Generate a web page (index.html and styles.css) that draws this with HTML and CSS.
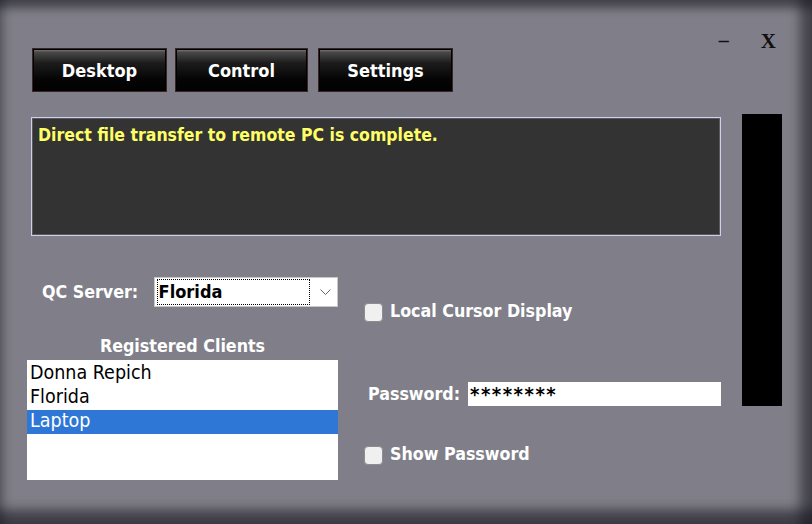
FILE: index.html
```html
<!DOCTYPE html>
<html>
<head>
<meta charset="utf-8">
<link rel="stylesheet" href="styles.css">
</head>
<body>
<div class="window">
  <div class="header">
    <div class="tabs">
      <button class="tab">Desktop</button>
      <button class="tab tab-narrow">Control</button>
      <button class="tab tab-last">Settings</button>
    </div>
    <div class="winctl">
      <span class="min">–</span>
      <span class="close">X</span>
    </div>
  </div>
  <div class="main">
    <div class="content">
      <div class="message">Direct file transfer to remote PC is complete.</div>
      <div class="lower">
        <div class="left">
          <div class="server-row">
            <span class="label">QC Server:</span>
            <div class="select">
              <span class="select-value">Florida</span>
              <svg class="chev" width="11" height="7" viewBox="0 0 11 7"><path d="M0.5 0.5 L5.5 5.5 L10.5 0.5" fill="none" stroke="#666" stroke-width="1"/></svg>
            </div>
          </div>
          <div class="clients-title">Registered Clients</div>
          <ul class="clients">
            <li>Donna Repich</li>
            <li>Florida</li>
            <li class="selected">Laptop</li>
          </ul>
        </div>
        <div class="right">
          <label class="check"><span class="box"></span><span class="label">Local Cursor Display</span></label>
          <div class="pw-row">
            <span class="label">Password:</span>
            <div class="pw-input">********</div>
          </div>
          <label class="check check2"><span class="box"></span><span class="label">Show Password</span></label>
        </div>
      </div>
    </div>
    <div class="bar"></div>
  </div>
</div>
</body>
</html>
```
FILE: styles.css
```css
html, body {
  margin: 0;
  padding: 0;
}
body {
  width: 812px;
  height: 524px;
  overflow: hidden;
  background: #807f89;
}
.window {
  box-sizing: border-box;
  width: 812px;
  height: 524px;
  background: #807f89;
  box-shadow:
    inset 0 16px 10px -8px rgba(20,20,28,0.55),
    inset 12px 0 10px -8px rgba(20,20,28,0.35),
    inset -20px 0 12px -8px rgba(20,20,28,0.55),
    inset 0 -22px 12px -8px rgba(20,20,28,0.6);
  padding: 32px 0 0 27px;
  font-family: "DejaVu Sans", sans-serif;
  font-stretch: condensed;
  color: #fff;
  display: flex;
  flex-direction: column;
}
.header {
  display: flex;
  justify-content: space-between;
  align-items: flex-start;
  width: 749px;
  height: 60px;
}
.tabs {
  display: flex;
  gap: 8px;
  margin-top: 16px;
  margin-left: 5px;
}
.tab {
  box-sizing: border-box;
  width: 135px;
  height: 44px;
  border: 1px solid #3b2424;
  box-shadow: inset 0 0 0 1px #000;
  background: linear-gradient(#8a8a8a 0px, #4a4a4a 3px, #1c1c1c 14px, #050505 30px, #000 44px);
  color: #fff;
  font-family: "DejaVu Sans", sans-serif;
  font-stretch: condensed;
  font-weight: bold;
  font-size: 18px;
  padding: 0;
}
.tab-narrow { width: 133px; }
.tab-last { margin-left: 2px; }
.winctl {
  display: flex;
  gap: 32px;
  font-family: "Liberation Serif", serif;
  font-weight: bold;
  color: #111;
  line-height: 20px;
}
.min { font-size: 20px; margin-top: -2px; }
.close { font-size: 21px; margin-top: -1px; }
.main {
  display: flex;
  gap: 21px;
  margin-top: 22px;
}
.content {
  width: 694px;
}
.message {
  box-sizing: border-box;
  margin: 3px 0 0 4px;
  width: 690px;
  height: 119px;
  border: 1px solid #cdd1ee;
  box-shadow: inset 0 0 0 1px #5a5a5e;
  background: #333333;
  color: #ffff66;
  font-weight: bold;
  font-size: 17.5px;
  padding: 7px 6px 5px;
}
.lower {
  display: flex;
  margin-top: 41px;
}
.left {
  width: 311px;
}
.label {
  font-weight: bold;
  font-size: 17.7px;
  color: #fff;
}
.server-row {
  display: flex;
  align-items: center;
  height: 30px;
  padding-left: 15px;
}
.server-row .label {
  width: 112px;
}
.select {
  box-sizing: border-box;
  width: 185px;
  height: 30px;
  background: #fff;
  border: 1px solid #c8c8c8;
  display: flex;
  align-items: center;
  padding: 2px;
}
.select-value {
  box-sizing: border-box;
  width: 153px;
  height: 26px;
  border: 1px dotted #000;
  color: #000;
  font-weight: bold;
  font-size: 18px;
  line-height: 24px;
  padding-left: 1px;
}
.chev {
  margin-left: 10px;
}
.clients-title {
  margin-top: 28px;
  text-align: center;
  font-weight: bold;
  font-size: 17.7px;
  height: 25px;
  line-height: 22px;
  padding-left: 0px;
}
.clients {
  list-style: none;
  margin: 0;
  padding: 2px 0 0;
  width: 311px;
  height: 120px;
  box-sizing: border-box;
  background: #fff;
  color: #000;
  font-size: 19.5px;
}
.clients li {
  height: 24px;
  line-height: 22px;
  padding-left: 3px;
}
.clients li.selected {
  background: #2e77d6;
  color: #fff;
}
.right {
  margin-left: 26px;
  width: 357px;
  display: flex;
  flex-direction: column;
}
.check {
  display: flex;
  align-items: center;
  gap: 7px;
  margin-top: 26px;
}
.box {
  box-sizing: border-box;
  width: 19px;
  height: 19px;
  border: 1px solid #8d8d8d;
  border-radius: 4px;
  background: #f0f0f0;
}
.check .label { margin-top: -4px; }
.pw-row {
  display: flex;
  align-items: center;
  margin-top: 60px;
  padding-left: 4px;
}
.pw-row .label { width: 100px; }
.pw-input {
  box-sizing: border-box;
  width: 253px;
  height: 24px;
  background: #fff;
  color: #000;
  font-weight: bold;
  font-size: 20px;
  letter-spacing: 1.5px;
  line-height: 24px;
  padding-left: 2px;
}
.check2 { margin-top: 40px; }
.bar {
  width: 40px;
  height: 292px;
  background: #000;
}
```
